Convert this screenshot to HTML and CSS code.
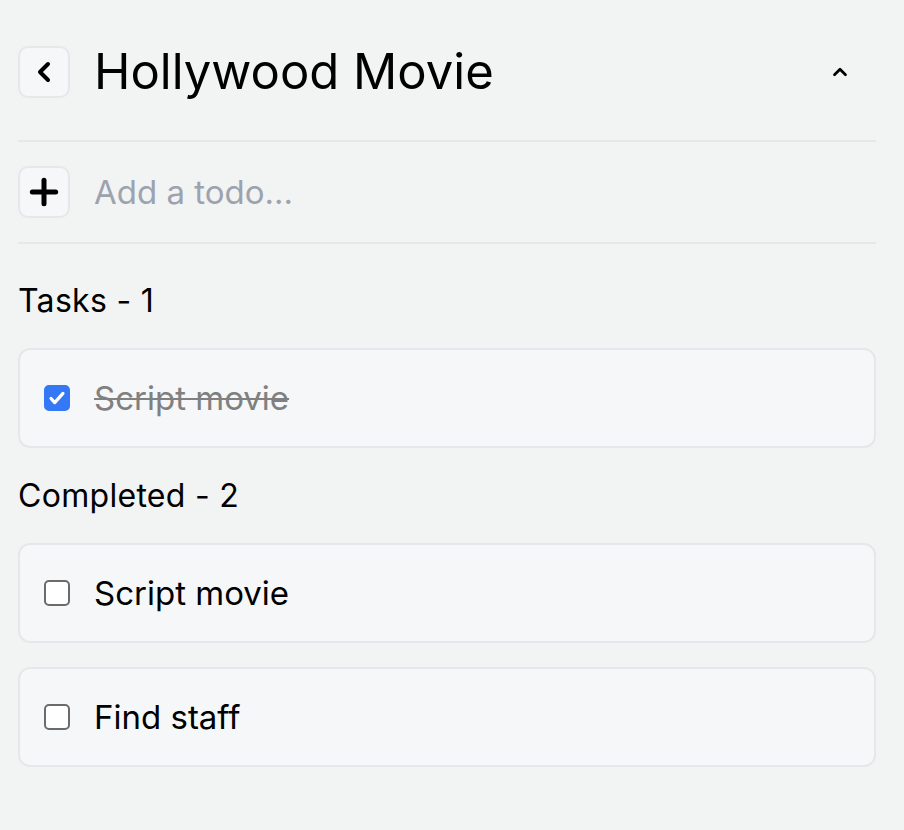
FILE: index.html
```html
<!DOCTYPE html>
<html lang="en">
<head>
<meta charset="utf-8">
<title>Hollywood Movie</title>
<link rel="stylesheet" href="styles.css">
</head>
<body>
<main class="panel">
  <header class="header">
    <button class="icon-btn" aria-label="Back">
      <svg width="32" height="32" viewBox="0 0 24 24" fill="none" stroke="#000" stroke-width="3" stroke-linecap="round" stroke-linejoin="round"><path d="m15 18-6-6 6-6"/></svg>
    </button>
    <h1 class="title">Hollywood Movie</h1>
    <button class="collapse" aria-label="Collapse">
      <svg width="22" height="22" viewBox="0 0 24 24" fill="none" stroke="#000" stroke-width="3" stroke-linecap="round" stroke-linejoin="round"><path d="m18 15-6-6-6 6"/></svg>
    </button>
  </header>

  <div class="add-row">
    <button class="icon-btn" aria-label="Add">
      <svg width="40" height="40" viewBox="0 0 24 24" fill="none" stroke="#000" stroke-width="3" stroke-linecap="round" stroke-linejoin="round"><path d="M5 12h14"/><path d="M12 5v14"/></svg>
    </button>
    <span class="placeholder">Add a todo...</span>
  </div>

  <section class="section first">
    <h2 class="label">Tasks - 1</h2>
    <div class="card">
      <span class="box checked">
        <svg width="24" height="24" viewBox="0 0 24 24" fill="none" stroke="#fff" stroke-width="3.5" stroke-linecap="round" stroke-linejoin="round"><path d="M5.5 12.5l4 4.5L18.5 7"/></svg>
      </span>
      <span class="text done">Script movie</span>
    </div>
  </section>

  <section class="section">
    <h2 class="label">Completed - 2</h2>
    <div class="list">
      <div class="card">
        <span class="box"></span>
        <span class="text">Script movie</span>
      </div>
      <div class="card">
        <span class="box"></span>
        <span class="text">Find staff</span>
      </div>
    </div>
  </section>
</main>
</body>
</html>
```

FILE: styles.css
```css
* { box-sizing: border-box; }

html, body {
  margin: 0;
  background: #f2f3f3;
}

body {
  font-family: Inter, "Noto Sans", sans-serif;
  color: #000;
}

.panel {
  padding: 46px 28px 40px 18px;
}

.header {
  display: flex;
  align-items: center;
  gap: 24px;
  height: 52px;
}

.icon-btn {
  width: 52px;
  height: 52px;
  flex: none;
  display: flex;
  align-items: center;
  justify-content: center;
  padding: 0;
  background: #f5f7f9;
  border: 2px solid #e5e7eb;
  border-radius: 10px;
}

.title {
  flex: 1;
  margin: 0;
  font-size: 49px;
  font-weight: 400;
  line-height: 52px;
}

.collapse {
  display: flex;
  align-items: center;
  justify-content: center;
  width: 22px;
  height: 22px;
  padding: 0;
  margin-right: 25px;
  margin-top: -1px;
  background: none;
  border: none;
}

.add-row {
  display: flex;
  align-items: center;
  gap: 24px;
  margin-top: 42px;
  padding: 24px 0;
  border-top: 2px solid #e5e7eb;
  border-bottom: 2px solid #e5e7eb;
}

.placeholder {
  font-size: 33px;
  color: #9ca3af;
  line-height: 52px;
}

.section.first .label {
  margin-top: 37px;
}

.label {
  margin: 28px 0 27px;
  font-size: 32px;
  font-weight: 400;
  line-height: 40px;
  letter-spacing: 0.3px;
}

.list {
  display: flex;
  flex-direction: column;
  gap: 24px;
}

.card {
  display: flex;
  align-items: center;
  gap: 24px;
  height: 100px;
  padding: 0 24px;
  background: #f5f7f9;
  border: 2px solid #e5e7eb;
  border-radius: 12px;
}

.box {
  width: 26px;
  height: 26px;
  flex: none;
  display: flex;
  align-items: center;
  justify-content: center;
  background: #fff;
  border: 2px solid #6b6b6b;
  border-radius: 5px;
}

.box.checked {
  background: #3478f6;
  border-color: #3478f6;
}

.text {
  font-size: 33px;
  line-height: 40px;
}

.text.done {
  color: #808080;
  text-decoration: line-through;
  text-decoration-thickness: 2px;
}
```
